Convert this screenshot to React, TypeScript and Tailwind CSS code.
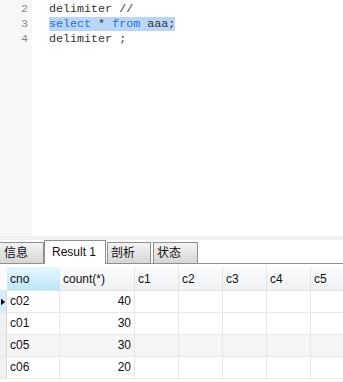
import React from 'react';

const rows = [
  { cno: 'c02', count: '40' },
  { cno: 'c01', count: '30' },
  { cno: 'c05', count: '30' },
  { cno: 'c06', count: '20' },
];

const extraCols = ['c1', 'c2', 'c3', 'c4', 'c5'];

const App: React.FC = () => {
  return (
    <div className="w-[343px] h-[382px] overflow-hidden bg-white font-['Liberation_Sans','Noto_Sans_CJK_SC',sans-serif] text-[12px] text-[#111]">
      {/* Editor */}
      <div className="flex h-[236px] font-['Liberation_Mono',monospace] text-[11.7px] leading-[15px]">
        <div className="w-[32px] bg-[#f7f7f7] pt-[2px] pr-[4px] text-right text-[#8a8a8a]">
          <div>2</div>
          <div>3</div>
          <div>4</div>
        </div>
        <div className="flex-1 pt-[2px] pl-[17px] text-[#333]">
          <div className="whitespace-pre">delimiter //</div>
          <div className="whitespace-pre">
            <span className="bg-[#b9d6f6]">
              <span className="text-[#2a6fe0]">select</span> * <span className="text-[#2a6fe0]">from</span> aaa;
            </span>
          </div>
          <div className="whitespace-pre">delimiter ;</div>
        </div>
      </div>
      <div className="h-[4px] bg-[#f0f0f0]" />

      {/* Tabs */}
      <div className="flex items-end h-[24px] border-b border-[#8c8f96]">
        <div className="shrink-0 w-[44px] h-[22px] -mb-px border border-l-0 border-[#8f8f8f] bg-gradient-to-b from-[#f3f3f3] to-[#d6d6d6] pl-[4px] leading-[20px]">
          信息
        </div>
        <div className="shrink-0 w-[62px] h-[24px] -mb-px border border-b-0 border-[#8f8f8f] bg-white pl-[7px] leading-[22px]">
          Result 1
        </div>
        <div className="shrink-0 ml-[1px] w-[44px] h-[22px] -mb-px border border-[#8f8f8f] bg-gradient-to-b from-[#f3f3f3] to-[#d6d6d6] pl-[3px] leading-[20px]">
          剖析
        </div>
        <div className="shrink-0 ml-[2px] w-[45px] h-[22px] -mb-px border border-[#8f8f8f] bg-gradient-to-b from-[#f3f3f3] to-[#d6d6d6] pl-[3px] leading-[20px]">
          状态
        </div>
      </div>

      {/* Result grid */}
      <div className="mt-[3px]">
        <div className="flex h-[24px] border-b border-[#e3e3e3]">
          <div className="shrink-0 w-[7px] bg-[#fbfbfb]" />
          <div className="shrink-0 w-[53px] bg-gradient-to-b from-[#e6f6fd] to-[#bde6f8] pl-[3px] leading-[24px]">cno</div>
          <div className="shrink-0 w-[75px] border-r border-[#e3e3e3] bg-gradient-to-b from-[#fbfcfd] to-[#eff1f4] pl-[3px] leading-[24px]">
            count(*)
          </div>
          {extraCols.map((c) => (
            <div
              key={c}
              className="shrink-0 w-[44px] border-r border-[#e3e3e3] bg-gradient-to-b from-[#fbfcfd] to-[#eff1f4] pl-[3px] leading-[24px]"
            >
              {c}
            </div>
          ))}
        </div>
        {rows.map((r, i) => (
          <div
            key={r.cno}
            className={`flex h-[22px] border-b border-[#e8e8e8] ${i === 2 ? 'bg-[#f5f5f5]' : 'bg-white'}`}
          >
            <div
              className={`shrink-0 w-[7px] border-r border-[#d8d8d8] flex items-center ${
                i === 0 ? 'bg-[#d5eefa]' : 'bg-[#f0f0f0]'
              }`}
            >
              {i === 0 && (
                <svg width="6" height="10" viewBox="0 0 6 10" className="ml-[1px]">
                  <path d="M0 1 L5 5 L0 9 Z" fill="#000" />
                </svg>
              )}
            </div>
            <div className="shrink-0 w-[53px] border-r border-[#e8e8e8] pl-[3px] leading-[21px]">{r.cno}</div>
            <div className="shrink-0 w-[75px] border-r border-[#e8e8e8] pr-[3px] text-right leading-[21px]">{r.count}</div>
            {extraCols.map((c) => (
              <div key={c} className="shrink-0 w-[44px] border-r border-[#e8e8e8]" />
            ))}
          </div>
        ))}
      </div>
    </div>
  );
};

export default App;
